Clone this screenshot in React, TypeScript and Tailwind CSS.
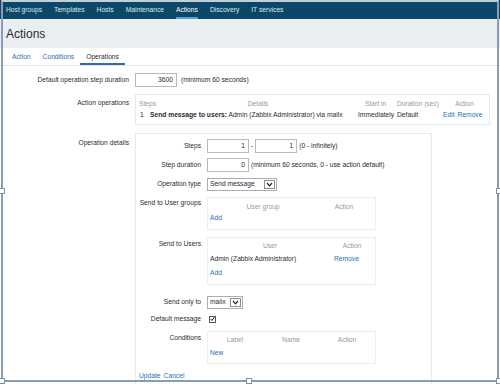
import React from "react";

const navItems = ["Host groups", "Templates", "Hosts", "Maintenance", "Actions", "Discovery", "IT services"];

function TextBox({ value, w = "w-[42px]" }: { value: string; w?: string }) {
  return (
    <div className={`${w} h-[14px] border border-[#b4bcc1] bg-white flex items-center justify-end pr-[3px]`}>{value}</div>
  );
}

function Select({ value, w }: { value: string; w: string }) {
  return (
    <div className={`${w} h-[13px] border border-[#a9b0b5] bg-white flex items-center justify-between pl-[2px] pr-[1px]`}>
      <span>{value}</span>
      <span className="w-[11px] h-[9px] border border-[#8b8f93] flex items-center justify-center">
        <svg width="7" height="5" viewBox="0 0 7 5">
          <path d="M1 1 L3.5 3.8 L6 1" fill="none" stroke="#222" strokeWidth="1.2" />
        </svg>
      </span>
    </div>
  );
}

function Handle({ cls }: { cls: string }) {
  return <div className={`absolute w-[6px] h-[6px] bg-white border border-[#7d92a8] ${cls}`} />;
}

export default function App() {
  return (
    <div className="relative w-[500px] h-[384px] overflow-hidden bg-white text-[#1f2c33] text-[6.7px] leading-none font-['Liberation_Sans',Arial,sans-serif]">
      {/* top navigation */}
      <div className="h-[19px] bg-[#0b4769] flex items-stretch pl-[6px] gap-[12px] text-[#dfe8ee]">
        {navItems.map((n) => (
          <div
            key={n}
            className={`flex items-center pt-[4px] border-b-2 ${n === "Actions" ? "border-[#5c9fcf] text-white" : "border-transparent"}`}
          >
            {n}
          </div>
        ))}
      </div>

      {/* page header */}
      <div className="h-[29px] bg-[#ebeef0] flex items-center pl-[6px] text-[12px] text-[#1f2c33]">Actions</div>

      {/* tabs */}
      <div className="h-[18px] flex items-stretch pl-[6px] border-b border-[#e3e7ea]">
        <div className="px-[6px] flex items-center pt-[3px] border-b-2 border-transparent text-[#2d6eb3]">Action</div>
        <div className="px-[6px] flex items-center pt-[3px] border-b-2 border-transparent text-[#2d6eb3]">Conditions</div>
        <div className="px-[6px] flex items-center pt-[3px] border-b-2 border-[#2d6eb3]">Operations</div>
      </div>

      {/* form */}
      <div className="pt-[7px] flex flex-col">
        <div className="flex items-center h-[14px]">
          <div className="w-[135px] pr-[6px] text-right">Default operation step duration</div>
          <TextBox value="3600" />
          <span className="ml-[4px]">(minimum 60 seconds)</span>
        </div>

        <div className="flex mt-[7px]">
          <div className="w-[135px] pr-[6px] text-right pt-[6px]">Action operations</div>
          <div className="w-[355px] h-[31px] border border-[#e6eaec] px-[3px] pt-[6px]">
            <div className="grid grid-cols-[11px_208px_39px_46px_43px] text-[#8d9ca5] whitespace-nowrap">
              <div>Steps</div>
              <div className="pl-[8px] text-center">Details</div>
              <div className="pl-[7px]">Start in</div>
              <div>Duration (sec)</div>
              <div className="text-center">Action</div>
            </div>
            <div className="grid grid-cols-[11px_208px_39px_46px_43px] mt-[4px] whitespace-nowrap">
              <div className="pl-[1px]">1</div>
              <div>
                <span className="font-bold">Send message to users:</span> Admin (Zabbix Administrator) via mailx
              </div>
              <div>Immediately</div>
              <div>Default</div>
              <div className="flex gap-[3px] text-[#2d6eb3]">
                <span>Edit</span>
                <span>Remove</span>
              </div>
            </div>
          </div>
        </div>

        <div className="flex mt-[8px]">
          <div className="w-[135px] pr-[6px] text-right pt-[7px]">Operation details</div>
          <div className="w-[297px] h-[260px] border border-[#e6eaec] pt-[5px] flex flex-col">
            <div className="flex items-center h-[14px]">
              <div className="w-[71px] pr-[6px] text-right">Steps</div>
              <TextBox value="1" />
              <span className="mx-[2px]">-</span>
              <TextBox value="1" />
              <span className="ml-[2px]">(0 - infinitely)</span>
            </div>
            <div className="flex items-center h-[14px] mt-[5px]">
              <div className="w-[71px] pr-[6px] text-right">Step duration</div>
              <TextBox value="0" />
              <span className="ml-[2px]">(minimum 60 seconds, 0 - use action default)</span>
            </div>
            <div className="flex items-center h-[14px] mt-[5px]">
              <div className="w-[71px] pr-[6px] text-right">Operation type</div>
              <Select value="Send message" w="w-[70px]" />
            </div>

            <div className="flex mt-[6px]">
              <div className="w-[71px] pr-[6px] text-right pt-[3px] whitespace-nowrap">Send to User groups</div>
              <div className="w-[169px] h-[33px] border border-[#eceff1] px-[2px] pt-[6px]">
                <div className="grid grid-cols-[106px_56px] text-[#8d9ca5]">
                  <div className="text-center">User group</div>
                  <div className="text-center">Action</div>
                </div>
                <div className="mt-[4px] text-[#2d6eb3]">Add</div>
              </div>
            </div>

            <div className="flex mt-[7px]">
              <div className="w-[71px] pr-[6px] text-right pt-[4px]">Send to Users</div>
              <div className="w-[169px] h-[48px] border border-[#eceff1] px-[2px] pt-[5px]">
                <div className="grid grid-cols-[120px_44px] text-[#8d9ca5]">
                  <div className="text-center">User</div>
                  <div className="text-center">Action</div>
                </div>
                <div className="grid grid-cols-[120px_44px] mt-[6px]">
                  <div>Admin (Zabbix Administrator)</div>
                  <div className="pl-[4px] text-[#2d6eb3]">Remove</div>
                </div>
                <div className="mt-[8px] text-[#2d6eb3]">Add</div>
              </div>
            </div>

            <div className="flex items-center h-[13px] mt-[11px]">
              <div className="w-[71px] pr-[6px] text-right">Send only to</div>
              <Select value="mailx" w="w-[36px]" />
            </div>

            <div className="flex items-center h-[8px] mt-[6px]">
              <div className="w-[71px] pr-[6px] text-right">Default message</div>
              <div className="ml-[2px] w-[7px] h-[7px] border border-[#555] bg-white flex items-center justify-center">
                <svg width="6" height="6" viewBox="0 0 6 6">
                  <path d="M0.8 3 L2.4 4.8 L5.3 0.8" fill="none" stroke="#111" strokeWidth="1.2" />
                </svg>
              </div>
            </div>

            <div className="flex mt-[8px]">
              <div className="w-[71px] pr-[6px] text-right pt-[4px]">Conditions</div>
              <div className="w-[169px] h-[33px] border border-[#eceff1] px-[2px] pt-[5px]">
                <div className="grid grid-cols-[50px_62px_50px] text-[#8d9ca5]">
                  <div className="text-center">Label</div>
                  <div className="text-center">Name</div>
                  <div className="text-center">Action</div>
                </div>
                <div className="mt-[6px] text-[#2d6eb3]">New</div>
              </div>
            </div>

            <div className="flex gap-[3px] pl-[3px] mt-[9px] text-[#2d6eb3]">
              <span>Update</span>
              <span>Cancel</span>
            </div>
          </div>
        </div>
      </div>

      {/* selection frame overlay */}
      <div className="absolute left-[1px] top-0 w-[498px] h-[382px] border-2 border-[#8a9db2] border-t-[#c3ced8] pointer-events-none" />
      <Handle cls="left-[-1px] top-[188px]" />
      <Handle cls="left-[496px] top-[188px]" />
      <Handle cls="left-[-1px] top-[378px]" />
      <Handle cls="left-[246px] top-[378px]" />
      <Handle cls="left-[496px] top-[378px]" />
    </div>
  );
}
